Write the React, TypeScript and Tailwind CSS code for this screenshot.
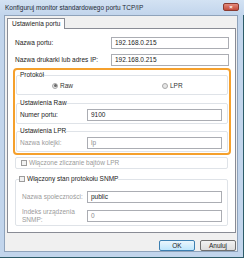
import type { ReactNode } from 'react'

function TextBox({ value, w, muted }: { value: string; w: string; muted?: boolean }) {
  return (
    <div
      className={`${w} h-[12px] shrink-0 border border-[#abadb3] bg-white pl-[3px] flex items-center text-[6.5px] ${
        muted ? 'text-[#8d8d8d]' : 'text-[#222]'
      }`}
    >
      {value}
    </div>
  )
}

function Group({ legend, children, className }: { legend: ReactNode; children: ReactNode; className: string }) {
  return (
    <fieldset className={`border border-[#dfe3e8] rounded-[2px] px-[3px] ${className}`}>
      <legend className="leading-[8px] text-[6.5px] text-[#222] px-0">{legend}</legend>
      {children}
    </fieldset>
  )
}

function Radio({ label, checked }: { label: string; checked?: boolean }) {
  return (
    <div className="flex items-center gap-[2px] text-[6.5px] text-[#333]">
      <div className="w-[6px] h-[6px] rounded-full border border-[#a9a9a9] bg-[#e6e6e6] flex items-center justify-center">
        {checked && <div className="w-[3px] h-[3px] rounded-full bg-[#6a6a6a]" />}
      </div>
      <span>{label}</span>
    </div>
  )
}

function CheckBox({ label, muted }: { label: string; muted?: boolean }) {
  return (
    <span className={`inline-flex items-center gap-[2px] ${muted ? 'text-[#9a9a9a]' : 'text-[#222]'}`}>
      <span className="w-[6px] h-[6px] border border-[#9c9c9c] bg-[#f2f2f2] inline-block" />
      <span>{label}</span>
    </span>
  )
}

export default function App() {
  return (
    <div className="w-[244px] h-[258px] bg-[#c2d5ec] flex flex-col overflow-hidden font-['Liberation_Sans',Arial,sans-serif]">
      {/* Title bar */}
      <div className="h-[15px] flex items-center pl-[5px] pr-[5px] bg-gradient-to-b from-[#d3e2f3] to-[#c2d5ec]">
        <span className="text-[6.5px] text-[#1e2a36]">Konfiguruj monitor standardowego portu TCP/IP</span>
        <div className="ml-auto mt-[-2px] w-[16px] h-[8px] rounded-[2px] border border-[#8a3a30] bg-gradient-to-b from-[#e3897b] to-[#c24a3a] flex items-center justify-center text-white text-[6px] leading-none font-bold">
          ×
        </div>
      </div>

      <div className="flex flex-1">
        <div className="w-[4px]" />
        {/* Client area */}
        <div className="flex-1 border border-[#8fa3bb] bg-[#f0f0f0] flex flex-col">
          <div className="pt-[2px] pl-[2px] flex">
            <div className="relative z-10 -mb-px h-[11px] px-[4px] border border-b-0 border-[#898c95] bg-white flex items-center text-[6.5px] text-[#222]">
              Ustawienia portu
            </div>
          </div>

          {/* Tab panel */}
          <div className="ml-[2px] mr-[1px] h-[205px] border border-[#898c95] bg-white flex flex-col text-[6.5px] text-[#222]">
            <div className="mt-[8px] pl-[7px] pr-[6px] flex items-center">
              <span className="flex-1">Nazwa portu:</span>
              <TextBox value="192.168.0.215" w="w-[118px]" />
            </div>
            <div className="mt-[5px] pl-[7px] pr-[6px] flex items-center">
              <span className="flex-1">Nazwa drukarki lub adres IP:</span>
              <TextBox value="192.168.0.215" w="w-[118px]" />
            </div>

            {/* Highlighted protocol block */}
            <div className="mt-[2px] ml-[5px] mr-[4px] h-[87px] border-2 border-[#f5a02c] rounded-[4px] px-[1px] pt-[1px] flex flex-col">
              <Group legend="Protokół" className="h-[24px]">
                <div className="mt-[2px] flex">
                  <div className="w-[110px] pl-[32px]">
                    <Radio label="Raw" checked />
                  </div>
                  <div className="pl-[32px]">
                    <Radio label="LPR" />
                  </div>
                </div>
              </Group>
              <Group legend="Ustawienia Raw" className="mt-[4px] h-[25px]">
                <div className="mt-[2px] flex items-center pr-[2px]">
                  <span className="flex-1">Numer portu:</span>
                  <TextBox value="9100" w="w-[135px]" />
                </div>
              </Group>
              <Group legend="Ustawienia LPR" className="mt-[3px] h-[25px]">
                <div className="mt-[2px] flex items-center pr-[2px]">
                  <span className="flex-1 text-[#9a9a9a]">Nazwa kolejki:</span>
                  <TextBox value="lp" w="w-[135px]" muted />
                </div>
              </Group>
            </div>

            <div className="mt-[2px] mx-[7px] h-[12px] border border-[#dfe3e8] rounded-[2px] pl-[5px] flex items-center">
              <CheckBox label="Włączone zliczanie bajtów LPR" muted />
            </div>

            <Group legend={<CheckBox label="Włączony stan protokołu SNMP" />} className="mt-[6px] mx-[7px] h-[51px]">
              <div className="mt-[7px] flex items-center pr-[2px] pl-[3px]">
                <span className="flex-1 text-[#9a9a9a]">Nazwa społeczności:</span>
                <TextBox value="public" w="w-[135px]" />
              </div>
              <div className="mt-[5px] flex items-center pr-[2px] pl-[3px]">
                <span className="flex-1 text-[#9a9a9a] leading-[8px]">
                  Indeks urządzenia
                  <br />
                  SNMP:
                </span>
                <TextBox value="0" w="w-[135px]" muted />
              </div>
            </Group>
          </div>

          {/* Buttons */}
          <div className="mt-[7px] mr-[1px] flex justify-end gap-[5px]">
            <div className="w-[36px] h-[11px] rounded-[2px] border border-[#3c7fb1] bg-gradient-to-b from-[#eaf6fd] to-[#bee6fd] flex items-center justify-center text-[6.5px] text-[#222]">
              OK
            </div>
            <div className="w-[36px] h-[11px] rounded-[2px] border border-[#707070] bg-gradient-to-b from-[#f2f2f2] to-[#dddddd] flex items-center justify-center text-[6.5px] text-[#222]">
              Anuluj
            </div>
          </div>
        </div>
        <div className="w-[5px]" />
        <div className="w-[1px] bg-[#2d5b68]" />
      </div>
      <div className="h-[5px] flex">
        <div className="flex-1" />
        <div className="w-[1px] bg-[#2d5b68]" />
      </div>
      <div className="h-[1px] bg-[#2d5b68]" />
    </div>
  )
}
